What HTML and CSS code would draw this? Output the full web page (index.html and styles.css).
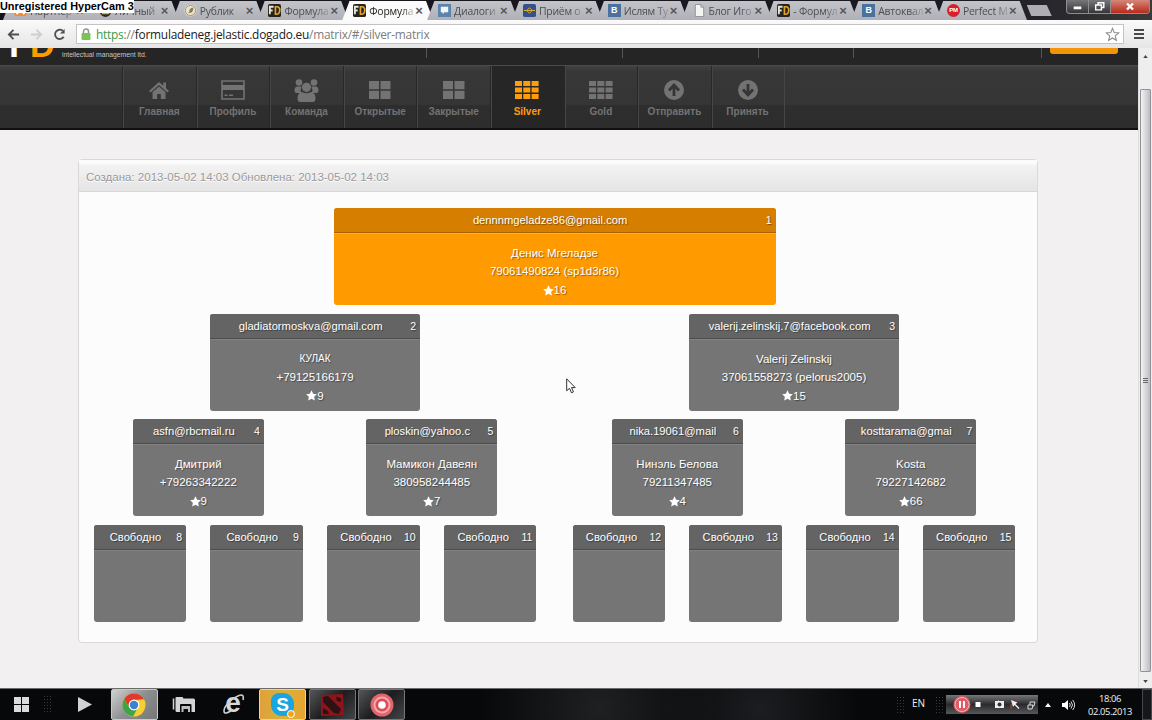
FILE: index.html
```html
<!DOCTYPE html>
<html lang="ru">

<head>
    <meta charset="UTF-8">
    <meta name="viewport" content="width=device-width, initial-scale=1.0">
    <title>Формула</title>
    <link rel="stylesheet" href="styles.css">
</head>

<body>
    <svg class="defs" width="0" height="0">
        <symbol id="star" viewBox="0 0 12 12">
            <path d="M6 .3 7.8 4l4 .6-2.9 2.8.7 4L6 9.5l-3.6 1.9.7-4L.2 4.6l4-.6z" />
        </symbol>
        <symbol id="fd" viewBox="0 0 14 14">
            <rect width="14" height="14" rx="2" fill="#27241f" />
            <path d="M6 3H2v8M2 7h3" stroke="#e8e4da" stroke-width="2" fill="none" />
            <path d="M8 3h1.5a3 3 0 0 1 3 4 3.500 3.500 0 0 1-3 4H8z" stroke="#e0a52c" stroke-width="1.800" fill="none" />
        </symbol>
        <symbol id="grid4" viewBox="0 0 22 18">
            <path d="M0 0h10v8.300H0zM11.500 0h10v8.300h-10zM0 9.700h10V18H0zM11.500 9.700h10V18h-10z" />
        </symbol>
        <symbol id="grid9" viewBox="0 0 24 18">
            <path d="M0 0h7v5H0zM8.300 0h7v5h-7zM16.600 0h7v5h-7zM0 6.500h7v5H0zM8.300 6.500h7v5h-7zM16.600 6.500h7v5h-7zM0 13h7v5H0zM8.300 13h7v5h-7zM16.600 13h7v5h-7z" />
        </symbol>
    </svg>

    <!-- browser tabs -->
    <div class="tabs">
        <div class="tab"><svg class="fav" viewBox="0 0 14 14"><rect y="1" width="14" height="12" rx="3" fill="#ef8a35" /><path d="M3 11 7 4l4 7" stroke="#fff" stroke-width="2" fill="none" /></svg><span>Партнер</span><i>×</i></div>
        <div class="tab"><svg class="fav" viewBox="0 0 14 14"><circle cx="7" cy="8" r="6" fill="#2b2a22" /><path d="M3 10h8" stroke="#d9b52c" stroke-width="2" /></svg><span>Личный</span><i>×</i></div>
        <div class="tab"><svg class="fav" viewBox="0 0 14 14"><circle cx="7" cy="7" r="6.500" fill="#e9e2cd" /><path d="M4 9c4 2 6-1 6-5-3 0-5 2-4 5z" fill="#8a7a52" /><circle cx="7" cy="7" r="5.500" stroke="#97907c" fill="none" /></svg><span>Рублик</span><i>×</i></div>
        <div class="tab"><svg class="fav"><use href="#fd" /></svg><span>Формула</span><i>×</i></div>
        <div class="tab active"><svg class="fav"><use href="#fd" /></svg><span>Формула</span><i>×</i></div>
        <div class="tab"><svg class="fav" viewBox="0 0 14 14"><rect width="14" height="14" fill="#5b83ab" /><path d="M3 3h8v6H7l-2 2V9H3z" fill="#f1f5f9" /></svg><span>Диалоги</span><i>×</i></div>
        <div class="tab"><svg class="fav" viewBox="0 0 14 14"><rect width="14" height="14" rx="2" fill="#34508f" /><path d="M1 7h12M7 4l3 3-3 3-3-3z" stroke="#e0b33c" fill="none" /></svg><span>Приём о</span><i>×</i></div>
        <div class="tab"><b class="fav vk">B</b><span>Ислям Ту</span><i>×</i></div>
        <div class="tab"><svg class="fav" viewBox="0 0 14 14"><path d="M2.500.5h6l3 3v10h-9z" fill="#f4f4f4" stroke="#8f9196" /><path d="M8.500.5v3h3" fill="none" stroke="#8f9196" /></svg><span>Блог Иго</span><i>×</i></div>
        <div class="tab"><svg class="fav"><use href="#fd" /></svg><span>- Формул</span><i>×</i></div>
        <div class="tab"><b class="fav vk">B</b><span>Автоквал</span><i>×</i></div>
        <div class="tab"><b class="fav pm">PM</b><span>Perfect M</span><i>×</i></div>
        <div class="newtab"></div>
        <div class="winbtns">
            <svg viewBox="0 0 22 13"><path d="M7 8h8" stroke="#fff" stroke-width="3" /></svg>
            <svg viewBox="0 0 22 13"><path d="M9.500 5V2.500h6v5H13M7 5h6v5H7z" stroke="#fff" stroke-width="1.500" fill="none" /></svg>
            <svg class="close" viewBox="0 0 38 13"><path d="m16 3.500 6 6m0-6-6 6" stroke="#fff" stroke-width="2.400" /></svg>
        </div>
    </div>
    <div class="hypercam">Unregistered HyperCam 3</div>

    <div class="toolbar">
        <svg class="tool" viewBox="0 0 14 14"><path d="M13 7H2m5-5L2 7l5 5" /></svg>
        <svg class="tool off" viewBox="0 0 14 14"><path d="M1 7h11M7 2l5 5-5 5" /></svg>
        <svg class="tool" viewBox="0 0 14 14"><path d="M11.500 9.500A5 5 0 1 1 10.500 3" /><path d="M12.500 1v5h-5z" class="solid" /></svg>
        <div class="address">
            <svg class="lock" viewBox="0 0 10 12"><path d="M2.500 6V3.500a2.500 2.500 0 0 1 5 0V6" fill="none" stroke="#8b9a86" stroke-width="1.500" /><rect x=".5" y="5" width="9" height="7" rx="1" fill="#7cc25a" /></svg>
            <div class="url"><em>https</em>://<strong>formuladeneg.jelastic.dogado.eu</strong>/matrix/#/silver-matrix</div>
            <svg class="bookmark" viewBox="-1 -1 14 14"><path d="M6 .3 7.600 4.200l4.200.3-3.200 2.800 1 4.100L6 9.200l-3.600 2.200 1-4.100L.2 4.500l4.200-.3z" /></svg>
        </div>
        <div class="menu"></div>
    </div>

    <div class="viewport">
        <div class="page">
            <header class="top">
                <div class="logo"><b>F</b><b class="d">D</b><small>intellectual management ltd.</small></div>
                <div class="cell w1"></div>
                <div class="cell w2"></div>
                <div class="cell w3"></div>
                <div class="cell w4"></div>
                <div class="exit"></div>
            </header>

            <nav class="nav">
                <a><svg viewBox="0 0 20 18"><path d="M10 1 0 10l1.500 1.500L10 4l8.500 7.500L20 10l-3-2.800V1.500h-2.700v3.300z" /><path d="M10 5.500 3.500 11v7h4.700v-5h3.600v5h4.700v-7z" /></svg>Главная</a>
                <a><svg class="wide" viewBox="0 0 24 20"><path d="M1 1h22v18H1z" fill="none" stroke="currentColor" stroke-width="1.600" /><path d="M1 5h22v5H1zM3.500 14.500h3v1.500h-3zM8 14.500h4v1.500H8z" /></svg>Профиль</a>
                <a><svg class="team" viewBox="0 0 25 23"><circle cx="5" cy="3.500" r="3.300" /><circle cx="20" cy="3.500" r="3.300" /><path d="M3 7.500h4.500l-1 4 1 2.500h-5Q.5 14 .5 11q0-3 2.500-3.500zM17.500 7.500H22q2.500.5 2.500 3.500 0 3-2 3h-5l1-2.500z" /><circle cx="12.500" cy="8.300" r="4.600" /><path d="M8 13q4.500 2.500 9 0 4.500 1 4.500 6 0 4-2.500 4H6q-2.500 0-2.500-4 0-5 4.500-6z" /></svg>Команда</a>
                <a><svg class="g4"><use href="#grid4" /></svg>Открытые</a>
                <a><svg class="g4"><use href="#grid4" /></svg>Закрытые</a>
                <a class="current"><svg class="g9"><use href="#grid9" /></svg>Silver</a>
                <a><svg class="g9"><use href="#grid9" /></svg>Gold</a>
                <a><svg viewBox="0 0 20 20"><circle cx="10" cy="10" r="10" /><path class="arrow" d="M10 16V5m-5 5.500L10 5l5 5.500" /></svg>Отправить</a>
                <a><svg viewBox="0 0 20 20"><circle cx="10" cy="10" r="10" /><path class="arrow" d="M10 4v11m-5-5.500 5 5.500 5-5.500" /></svg>Принять</a>
            </nav>

            <section class="panel">
                <div class="panel-head">Создана: 2013-05-02 14:03 Обновлена: 2013-05-02 14:03</div>
                <div class="tree">
                    <div class="level root">
                        <div class="card orange">
                            <h3><span>dennnmgeladze86@gmail.com</span><b>1</b></h3>
                            <p>Денис Мгеладзе</p>
                            <p>79061490824 (sp1d3r86)</p>
                            <p class="rate"><svg><use href="#star" /></svg>16</p>
                        </div>
                    </div>
                    <div class="level">
                        <div class="half two">
                            <div class="card">
                                <h3><span>gladiatormoskva@gmail.com</span><b>2</b></h3>
                                <p class="caps">КУЛАК</p>
                                <p>+79125166179</p>
                                <p class="rate"><svg><use href="#star" /></svg>9</p>
                            </div>
                        </div>
                        <div class="half two">
                            <div class="card">
                                <h3><span>valerij.zelinskij.7@facebook.com</span><b>3</b></h3>
                                <p>Valerij Zelinskij</p>
                                <p>37061558273 (pelorus2005)</p>
                                <p class="rate"><svg><use href="#star" /></svg>15</p>
                            </div>
                        </div>
                    </div>
                    <div class="level">
                        <div class="half three">
                            <div class="card">
                                <h3><span>asfn@rbcmail.ru</span><b>4</b></h3>
                                <p>Дмитрий</p>
                                <p>+79263342222</p>
                                <p class="rate"><svg><use href="#star" /></svg>9</p>
                            </div>
                            <div class="card">
                                <h3><span>ploskin@yahoo.c</span><b>5</b></h3>
                                <p>Мамикон Давеян</p>
                                <p>380958244485</p>
                                <p class="rate"><svg><use href="#star" /></svg>7</p>
                            </div>
                        </div>
                        <div class="half three">
                            <div class="card">
                                <h3><span>nika.19061@mail</span><b>6</b></h3>
                                <p>Нинэль Белова</p>
                                <p>79211347485</p>
                                <p class="rate"><svg><use href="#star" /></svg>4</p>
                            </div>
                            <div class="card">
                                <h3><span>kosttarama@gmai</span><b>7</b></h3>
                                <p>Kosta</p>
                                <p>79227142682</p>
                                <p class="rate"><svg><use href="#star" /></svg>66</p>
                            </div>
                        </div>
                    </div>
                    <div class="level">
                        <div class="half four">
                            <div class="card"><h3><span>Свободно</span><b>8</b></h3></div>
                            <div class="card"><h3><span>Свободно</span><b>9</b></h3></div>
                            <div class="card"><h3><span>Свободно</span><b>10</b></h3></div>
                            <div class="card"><h3><span>Свободно</span><b>11</b></h3></div>
                        </div>
                        <div class="half four">
                            <div class="card"><h3><span>Свободно</span><b>12</b></h3></div>
                            <div class="card"><h3><span>Свободно</span><b>13</b></h3></div>
                            <div class="card"><h3><span>Свободно</span><b>14</b></h3></div>
                            <div class="card"><h3><span>Свободно</span><b>15</b></h3></div>
                        </div>
                    </div>
                </div>
            </section>
        </div>
        <div class="scrollbar">
            <svg viewBox="0 0 6 4"><path d="M0 4h6L3 0z" /></svg>
            <div class="thumb"><span></span></div>
            <svg viewBox="0 0 6 4"><path d="M0 0h6L3 4z" /></svg>
        </div>
    </div>

    <!-- windows taskbar -->
    <div class="taskbar">
        <div class="start"><svg width="15" height="15" viewBox="0 0 15 15"><path d="M0 0h7v7H0zM8 0h7v7H8zM0 8h7v7H0zM8 8h7v7H8z" fill="#dcdcdc" /></svg></div>
        <div class="dots"></div>
        <div class="app play"><svg width="14" height="15" viewBox="0 0 14 15"><path d="M0 0v15l14-7.500z" fill="#d2d2d2" /></svg></div>
        <div class="app open chrome">
            <svg width="24" height="24" viewBox="0 0 24 24">
                <circle cx="12" cy="12" r="11.500" fill="#f8ce30" />
                <path d="M2 6.300A11.500 11.500 0 0 1 22 6.300L12 7 7.500 14.500z" fill="#de3b2e" />
                <path d="M2 6.300A11.500 11.500 0 0 0 11 23.500L16 14.500 8 15z" fill="#3fa447" />
                <circle cx="12" cy="12" r="5.400" fill="#fff" />
                <circle cx="12" cy="12" r="4.200" fill="#3e7fd0" />
            </svg>
        </div>
        <div class="app"><svg width="24" height="17" viewBox="0 0 24 17"><path d="M1.500 2.500v11" fill="none" stroke="#d4d4d4" stroke-width="1.500" /><path d="M3.500 2q0-1 1-1h6l1 1.500h10q1.500 0 1.500 1.500v12h-3.500V9q0-1-1-1H9Q8 8 8 9v7H5q-1.500 0-1.500-1.500z" fill="#d4d4d4" /><path d="M9.500 10h8.500v6h-2v-3h-4.500v3h-2z" fill="#bdbdbd" /></svg></div>
        <div class="app ie"><b>e</b><svg viewBox="0 0 24 22"><path d="M21 7c1-4 0-6-4-4.500C10 5 2 13 2 18c0 4 5 1 7 0" fill="none" stroke="#cfcfcf" stroke-width="1.600" /></svg></div>
        <div class="app open skype"><b>S</b><span></span></div>
        <div class="app open"><svg width="24" height="22" viewBox="0 0 24 22"><path d="m1 1 22-1 1 21-23 1z" fill="#8d1418" /><path d="M3 3l5-1 13 13-2 5-5-1L3 8zM16 3l5 1v4l-4-1zM3 14l5 3 1 3H3z" fill="#2b1214" /></svg></div>
        <div class="app open"><svg width="24" height="24" viewBox="0 0 24 24"><circle cx="12" cy="12" r="11.500" fill="#e2656c" /><circle cx="12" cy="12" r="8.500" fill="#f3a9ac" /><circle cx="12" cy="12" r="6.500" fill="#dc4d57" /><circle cx="12" cy="12" r="3.800" fill="#fff" /></svg></div>

        <div class="tray">
            <div class="dots"></div>
            <span class="lang">EN</span>
            <div class="dots"></div>
            <div class="recorder">
                <svg width="92" height="19" viewBox="0 0 92 19">
                    <circle cx="16" cy="9.500" r="8.500" fill="#df5c66" /><circle cx="16" cy="9.500" r="7" fill="none" stroke="#f4b5b8" />
                    <path d="M14 6v7M18 6v7" stroke="#fff" stroke-width="2" />
                    <path d="M29.500 7h5v5h-5z" fill="#fff" />
                    <path d="M49 6h3l1-1v1h5v7h-9z" fill="#eee" /><circle cx="53.500" cy="9.500" r="2" fill="#333" />
                    <path d="m65 5 2 7 1.500-2 4 4 1-1-4-4 2-1.500z" fill="#eee" /><path d="M65 14V9m5-4h4" stroke="#a44" />
                    <path d="M84 10V7h5l-1 4h-2M82 10h5l-1 4h-4z" fill="none" stroke="#ddd" />
                </svg>
            </div>
            <svg class="up" viewBox="0 0 6 4"><path d="M0 4h6L3 0z" fill="#fff" /></svg>
            <svg class="sound" viewBox="0 0 13 12"><path d="M0 4h2.500L6 1v10L2.500 8H0z" fill="#fff" /><path d="M7.500 4q1.500 2 0 4M9 2.500q3 3.500 0 7M10.700 1q4 5 0 10" fill="none" stroke="#ddd" /></svg>
            <div class="clock">18:06<br>02.05.2013</div>
            <div class="desktop"></div>
        </div>
    </div>

    <svg class="cursor" viewBox="0 0 10 16"><path d="M.7.800v12l2.800-2.500 2 4.500 2-.9-2-4.300h3.700z" fill="#fff" stroke="#333" /></svg>
</body>

</html>
```
FILE: styles.css
```css
* {
    box-sizing: border-box;
}

body {
    margin: 0;
    width: 1152px;
    height: 720px;
    overflow: hidden;
    display: flex;
    flex-direction: column;
    font: 11.500px/18px "Liberation Sans", Arial, sans-serif;
    background: #f2f0f1;
}

svg {
    display: block;
    flex: none;
}

.defs {
    position: absolute;
}

/* tabs */
.tabs {
    flex: none;
    height: 20px;
    display: flex;
    align-items: flex-end;
    background: linear-gradient(90deg, #14131a, #1b1a20 85%, #3a3a3c);
}

.tab {
    flex: none;
    display: flex;
    align-items: center;
    width: 91px;
    height: 19px;
    margin-right: -6.200px;
    padding: 0 10px 0 11px;
    background: linear-gradient(#c3c4ca, #b0b1b7);
    clip-path: polygon(8% 0, 92% 0, 100% 100%, 0 100%);
    color: #4c4d52;
    font: 10.400px/18px "Open Sans", "Noto Sans", sans-serif;
    letter-spacing: -.2px;
}

.tab:first-child {
    margin-left: 3px;
}

.tab.active {
    position: relative;
    background: #fbfafb;
    color: #222;
}

.fav {
    flex: none;
    width: 13px;
    height: 13px;
    margin-right: 3px;
}

.tab span {
    flex: 1;
    overflow: hidden;
    white-space: nowrap;
    -webkit-mask-image: linear-gradient(90deg, #000 70%, rgba(0, 0, 0, .2));
    mask-image: linear-gradient(90deg, #000 70%, rgba(0, 0, 0, .2));
}

.tab i {
    width: 8px;
    margin-left: 1px;
    font: bold 13px/18px "Liberation Sans", sans-serif;
    color: #56565b;
}

.vk,
.pm {
    background: #4b729f;
    color: #fff;
    font: bold 9px/13px "Liberation Sans", sans-serif;
    text-align: center;
}

.pm {
    background: #d8202c;
    border-radius: 50%;
    font-size: 6px;
}

.newtab {
    width: 25px;
    height: 11px;
    margin: 0 0 4px 6px;
    background: #aeafb4;
    clip-path: polygon(0 0, 80% 0, 100% 100%, 18% 100%);
}

.winbtns {
    display: flex;
    align-self: flex-start;
    height: 14px;
    margin-left: auto;
    margin-right: 2px;
    border: 1px solid #8e8e90;
    border-top: 0;
    border-radius: 0 0 4px 4px;
    background: linear-gradient(#77777a, #343437);
    overflow: hidden;
}

.winbtns svg {
    width: 22px;
    height: 13px;
    border-right: 1px solid #8e8e90;
}

.winbtns .close {
    width: 38px;
    border: 0;
    background: linear-gradient(#d48778, #b92a1b);
}

.hypercam {
    position: absolute;
    left: 0;
    top: 0;
    width: 134px;
    height: 13px;
    background: #fff;
    color: #000;
    font: bold 10.900px/13px "Liberation Sans", Arial, sans-serif;
    white-space: nowrap;
}

/* address row */
.toolbar {
    flex: none;
    height: 28px;
    display: flex;
    align-items: center;
    gap: 10px;
    padding: 0 8px 0 7px;
    background: linear-gradient(#fbfafb, #e6e5e6);
}

.tool {
    width: 13px;
    height: 13px;
    fill: none;
    stroke: #505050;
    stroke-width: 2;
}

.tool.off {
    stroke: #cfcfcf;
}

.tool .solid {
    fill: #505050;
    stroke: none;
}

.address {
    flex: 1;
    height: 20px;
    display: flex;
    align-items: center;
    padding: 0 3px 0 4px;
    background: #fff;
    border: 1px solid #c4c2c3;
}

.lock {
    width: 10px;
    height: 12px;
}

.url {
    flex: 1;
    margin-left: 5px;
    color: #7d7d7d;
    font: 11.900px/18px "Open Sans", "Noto Sans", sans-serif;
    letter-spacing: -.23px;
    white-space: nowrap;
}

.url em {
    font-style: normal;
    color: #3c9a43;
}

.url strong {
    font-weight: normal;
    color: #222;
}

.bookmark {
    width: 15px;
    height: 15px;
    fill: #fff;
    stroke: #8a8a8a;
}

.menu {
    width: 10px;
    height: 10px;
    background: repeating-linear-gradient(#484848 0 2px, transparent 2px 4px);
}

/* page */
.viewport {
    flex: 1;
    min-height: 0;
    display: flex;
}

.page {
    flex: 1;
    overflow: hidden;
}

.top {
    height: 17px;
    display: flex;
    overflow: hidden;
    background: #252525;
}

.logo {
    width: 427px;
    height: 10px;
    display: flex;
    align-items: flex-end;
    padding-left: 9px;
    border-right: 1px solid #555;
    color: #fff;
}

.logo b {
    height: 31px;
    width: 21px;
    font: bold 36px/36px "Liberation Sans", sans-serif;
}

.logo .d {
    width: 26px;
    font-size: 34px;
    color: #ff9c00;
}

.logo small {
    align-self: flex-start;
    margin-left: 6px;
    font-size: 6.800px;
    line-height: 14px;
    color: #c4c4c4;
}

.cell {
    height: 10px;
    border-right: 1px solid #555;
}

.w1 {
    width: 196px;
}

.w2 {
    width: 136px;
}

.w3 {
    width: 95px;
}

.w4 {
    width: 188px;
}

.exit {
    width: 68px;
    height: 6px;
    margin-left: 8px;
    background: #f39508;
    border-radius: 0 0 3px 3px;
}

.nav {
    display: flex;
    height: 65px;
    padding-left: 123px;
    border-top: 1px solid #4a4a4a;
    border-bottom: 2px solid #111;
    background: linear-gradient(#414141, #373737 6px, #353535 39px, #2e2e2e 39px, #2d2d2d);
}

.nav a {
    width: 73.600px;
    display: flex;
    flex-direction: column;
    align-items: center;
    border-left: 1px solid #464646;
    box-shadow: -1px 0 #272727;
    color: #737373;
    font-weight: bold;
    font-size: 10px;
    line-height: 14px;
    padding: 14px 2px 0 0;
}

.nav a:last-child {
    border-right: 1px solid #464646;
}

.nav svg {
    width: 20px;
    height: 20px;
    margin-bottom: 5px;
    fill: currentColor;
}

.nav .wide,
.nav .g9 {
    width: 24px;
}

.nav .g4 {
    width: 22px;
}

.nav .g4,
.nav .g9 {
    height: 18px;
    margin: 1px 0 6px;
}

.nav .team {
    width: 25px;
    height: 23px;
    margin: -1px 0 3px;
}

.nav .arrow {
    fill: none;
    stroke: #353535;
    stroke-width: 2.800;
}

.nav .current {
    background: #262626;
    color: #ff9c0a;
}

.panel {
    width: 960px;
    height: 484px;
    margin: 29px 0 0 78px;
    background: #fdfcfd;
    border: 1px solid #dad9da;
    border-radius: 4px;
}

.panel-head {
    height: 32px;
    padding: 0 7px;
    line-height: 34px;
    color: #999;
    border-bottom: 1px solid #d9d8d9;
    background: linear-gradient(#fdfcfd 3px, #f4f3f4 5px, #e5e4e5);
    text-shadow: 0 1px #fff;
}

/* matrix */
.tree {
    display: flex;
    flex-direction: column;
    gap: 8.600px;
    padding: 16px 0 0 2.500px;
}

.level {
    display: grid;
    grid-template-columns: 467px 467px;
    gap: 12px;
}

.root {
    display: flex;
    justify-content: center;
    width: 946px;
}

.root .card {
    width: 442px;
}

.half {
    display: flex;
    justify-content: space-around;
}

.two .card {
    width: 210px;
}

.three .card {
    width: 131px;
}

.four .card {
    width: 92.500px;
}

.card {
    height: 97px;
    overflow: hidden;
    border-radius: 3px;
    background: #757575;
    color: #fff;
    text-align: center;
    text-shadow: 1px 1px 1px rgba(0, 0, 0, .4);
}

.card h3 {
    display: flex;
    height: 25px;
    margin: 0 0 11px;
    padding: 0 4px 0 1px;
    border-bottom: 1px solid #4c4c4c;
    background: #646464;
    font-size: 11.200px;
    font-weight: normal;
    line-height: 24px;
    box-shadow: 0 1px #838383;
}

.card h3 span {
    flex: 1;
    white-space: nowrap;
}

.card h3 b {
    font-size: 10.500px;
    font-weight: normal;
}

.card p {
    margin: 0;
}

.card .caps {
    font-size: 10px;
}

.rate {
    display: flex;
    justify-content: center;
    align-items: center;
    height: 20px;
}

.rate svg {
    width: 11px;
    height: 11px;
    fill: #fff;
}

.orange {
    background: #ff9a00;
}

.orange h3 {
    background: #d67e00;
    border-color: #a86300;
    box-shadow: 0 1px #ffae38;
}

.scrollbar {
    width: 14px;
    display: flex;
    flex-direction: column;
    align-items: center;
    padding: 7px 0 5px;
    background: #efeeef;
    border-left: 1px solid #dedede;
}

.scrollbar svg {
    width: 5px;
    height: 3px;
    fill: #444;
}

.thumb {
    flex: 1;
    width: 11px;
    margin: 31px 0 8px;
    display: flex;
    align-items: center;
    justify-content: center;
    border: 1px solid #929296;
    border-radius: 1px;
    background: linear-gradient(90deg, #f2f2f3, #d9d9dc 50%, #bcbcc2);
}

.thumb span {
    width: 5px;
    height: 6px;
    background: repeating-linear-gradient(#666 0 1px, transparent 1px 2px);
}

/* taskbar */
.taskbar {
    flex: none;
    height: 32px;
    display: flex;
    border-top: 1px solid #6b6b6b;
    background: radial-gradient(circle at 52% 20px, #1f2022, transparent 120px), radial-gradient(circle at 66% 20px, #1c1d20, transparent 100px), #070809;
}

.start {
    width: 43px;
    padding: 8px 0 0 14px;
}

.dots {
    width: 8px;
    margin: 6px 0;
    background: radial-gradient(#3b3b3b 35%, transparent 40%) 0 0 / 3px 3px;
}

.app {
    width: 47px;
    margin-right: 2.500px;
    display: flex;
    align-items: center;
    justify-content: center;
}

.play {
    margin-left: 10px;
}

.open {
    border: 1px solid #77777a;
    border-radius: 2px;
    background: linear-gradient(135deg, #555658, #1d1d20 50%, #444548);
}

.chrome {
    border-color: #c9c9c9;
    background: linear-gradient(135deg, #d0d0d0, #8d8e90 50%, #777);
}

.ie {
    position: relative;
    color: #d8d8d8;
}

.ie b {
    font: bold 28px/24px "Liberation Sans", sans-serif;
    margin-top: -4px;
}

.ie svg {
    position: absolute;
    left: 12px;
    top: 4px;
    width: 24px;
    height: 22px;
}

.skype {
    position: relative;
    border-color: #f2d68c;
    background: linear-gradient(90deg, #e0a03a, #d8b13c 50%, #e6a52e);
}

.skype b {
    width: 23px;
    height: 23px;
    border-radius: 8px 11px 9px 11px;
    background: #18a5e0;
    color: #fff;
    font: bold 19px/23px "Liberation Sans", sans-serif;
    text-align: center;
}

.skype span {
    position: absolute;
    right: 10px;
    bottom: 1px;
    width: 8px;
    height: 8px;
    border: 1px solid #fff;
    border-radius: 50%;
    background: #f6a21a;
}

.tray {
    margin-left: auto;
    display: flex;
    align-items: center;
    color: #f0f0f0;
    font: 10px/14px "Open Sans", "Noto Sans", sans-serif;
}

.tray .dots {
    height: 18px;
    margin: 0;
}

.lang {
    width: 27px;
    padding: 0 0 4px 8px;
    margin-right: 4px;
}

.recorder {
    margin: 0 7px 0 3px;
    background: linear-gradient(#77777a, #2b2b2d 50%, #57585a);
}

.up {
    width: 6px;
    height: 4px;
}

.sound {
    width: 13px;
    height: 12px;
    margin-left: 11px;
}

.clock {
    width: 46px;
    margin: 0 9px 0 12px;
    text-align: center;
    font-size: 9.400px;
    line-height: 13px;
    letter-spacing: -.4px;
}

.desktop {
    width: 10px;
    height: 31px;
    border: 1px solid #47484a;
    background: #16171a;
}

.cursor {
    position: absolute;
    left: 566px;
    top: 378px;
    width: 10px;
    height: 16px;
}
```
